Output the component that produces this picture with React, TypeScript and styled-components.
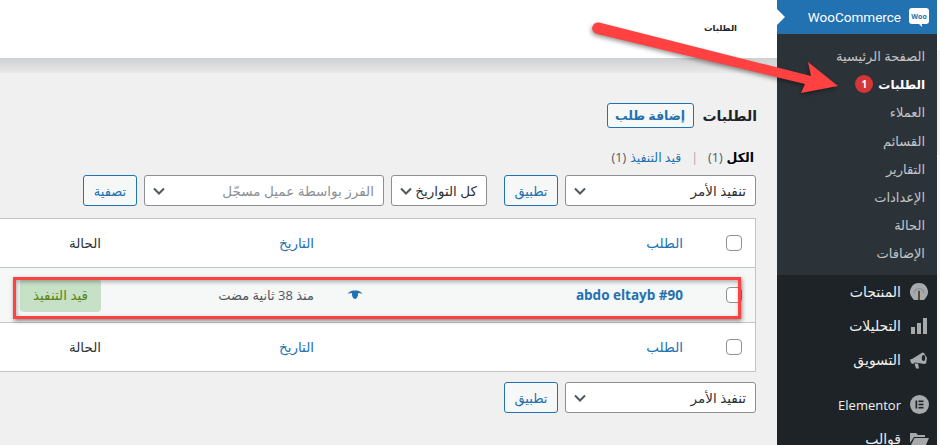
import React, { FC } from 'react';
import styled, { createGlobalStyle } from 'styled-components';

const GlobalStyle = createGlobalStyle`
  html, body {
    margin: 0;
    padding: 0;
    background: #f0f0f1;
  }
  * {
    box-sizing: border-box;
  }
`;

const subItems = ['الصفحة الرئيسية', 'الطلبات', 'العملاء', 'القسائم', 'التقارير', 'الإعدادات', 'الحالة', 'الإضافات'];

const Chevron: FC = () => (
  <svg width="16" height="16" viewBox="0 0 16 16" fill="none" stroke="#50575e" strokeWidth="2" aria-hidden>
    <path d="M3 5.500l5 5 5-5" />
  </svg>
);

const ProductsIcon: FC = () => (
  <svg width="20" height="20" viewBox="0 0 20 20" fill="#a7aaad" aria-hidden>
    <path d="M10 1a9 9 0 0 0-6.500 15.200L5 18h10l1.500-1.800A9 9 0 0 0 10 1z" />
    <path d="M5 11.500a5 5 0 1 1 10 0" fill="none" stroke="#8c8f94" strokeWidth="1.200" />
    <path d="M9 18V9.500a1 1 0 0 1 2 0V18z" fill="#5b4a2c" />
  </svg>
);

const AnalyticsIcon: FC = () => (
  <svg width="18" height="18" viewBox="0 0 18 18" fill="#a7aaad" aria-hidden>
    <rect x="1" y="10" width="4" height="7" />
    <rect x="7" y="6" width="4" height="11" />
    <rect x="13" y="1" width="4" height="16" />
  </svg>
);

const MarketingIcon: FC = () => (
  <svg width="20" height="20" viewBox="0 0 20 20" fill="#a7aaad" aria-hidden>
    <path d="M1 9.500l2 -0.500 10.500 -6.500 1.500 0.500 3 5 -1 5.500 -1.500 0.500 -9.500 -1.500 -2 1.500 -2 -1z" />
    <ellipse cx="14.500" cy="8" rx="1.700" ry="3" fill="#1d2327" />
    <path d="M5.500 13.500h3.500l1 5h-3z" />
  </svg>
);

const ElementorIcon: FC = () => (
  <svg width="19" height="19" viewBox="0 0 19 19" aria-hidden>
    <circle cx="9.500" cy="9.500" r="9.500" fill="#a7aaad" />
    <rect x="5.500" y="5.500" width="1.700" height="8" fill="#1d2327" />
    <rect x="8.500" y="5.500" width="5" height="1.600" fill="#1d2327" />
    <rect x="8.500" y="8.700" width="5" height="1.600" fill="#1d2327" />
    <rect x="8.500" y="11.900" width="5" height="1.600" fill="#1d2327" />
  </svg>
);

const FolderIcon: FC = () => (
  <svg width="20" height="18" viewBox="0 0 20 18" fill="#a7aaad" aria-hidden>
    <path d="M1 3h6l2 2h7v2H5L1 13z" />
    <path d="M5.500 8H20l-3.500 8H1.500z" />
  </svg>
);

const EyeIcon: FC = () => (
  <svg width="16" height="10" viewBox="0 0 16 10" fill="#2271b1" aria-hidden>
    <path d="M0.500 3.500C3 1 5.500 0.500 8 0.500s5 0.500 7.500 3C14 3.800 12.500 3.200 11 3c0.500 3-1.500 6-3 6S4.500 6 5 3C3.500 3.200 2 3.800 0.500 3.500z" />
  </svg>
);

const ArrowOverlay: FC = () => (
  <ArrowSvg viewBox="0 0 940 445" width="940" height="445" aria-hidden>
    <path
      d="M599 22.500 L811 76 L808 62 L838 86 L801 93 L805 84 L597 34 A5.800 5.800 0 0 1 599 22.500 Z"
      fill="#ff4141"
    />
  </ArrowSvg>
);

const OrdersTableRow: FC<{ footer?: boolean }> = ({ footer }) => (
  <HeadRow $footer={footer}>
    <CheckCell>
      <Checkbox />
    </CheckCell>
    <HeadLink>الطلب</HeadLink>
    <HeadLink>التاريخ</HeadLink>
    <HeadText>الحالة</HeadText>
  </HeadRow>
);

const BulkActions: FC = () => (
  <>
    <Select $width={191}>
      <span>تنفيذ الأمر</span>
      <Chevron />
    </Select>
    <OutlineButton $width={54}>تطبيق</OutlineButton>
  </>
);

export default function App() {
  return (
    <>
      <GlobalStyle />
      <Page dir="rtl">
        <EdgeStrip />
        <Sidebar>
          <WooHeader>
            <WooBadge>Woo</WooBadge>
            <WooTitle>WooCommerce</WooTitle>
            <HeaderNotch />
          </WooHeader>
          <SubMenu>
            {subItems.map(label => (
              <SubItem key={label} $active={label === 'الطلبات'}>
                {label}
                {label === 'الطلبات' && <CountBadge>1</CountBadge>}
              </SubItem>
            ))}
          </SubMenu>
          <MenuItem>
            <MenuIcon><ProductsIcon /></MenuIcon>
            المنتجات
          </MenuItem>
          <MenuItem>
            <MenuIcon><AnalyticsIcon /></MenuIcon>
            التحليلات
          </MenuItem>
          <MenuItem>
            <MenuIcon><MarketingIcon /></MenuIcon>
            التسويق
          </MenuItem>
          <MenuSeparator />
          <MenuItem $size={13}>
            <MenuIcon><ElementorIcon /></MenuIcon>
            Elementor
          </MenuItem>
          <MenuItem>
            <MenuIcon><FolderIcon /></MenuIcon>
            قوالب
          </MenuItem>
        </Sidebar>

        <Main>
          <TopBar>
            <TopBarTitle>الطلبات</TopBarTitle>
          </TopBar>
          <TopBarShade />
          <Content>
            <TitleRow>
              <Title>الطلبات</Title>
              <AddButton>إضافة طلب</AddButton>
            </TitleRow>
            <StatusFilters>
              <strong>الكل</strong> <Count>(1)</Count>
              <Pipe>|</Pipe>
              <StatusLink>قيد التنفيذ</StatusLink> <Count>(1)</Count>
            </StatusFilters>
            <FilterBar>
              <BulkActions />
              <Select $width={96} $gapStart={10}>
                <span>كل التواريخ</span>
                <Chevron />
              </Select>
              <Select $width={240} $muted>
                <span>الفرز بواسطة عميل مسجّل</span>
                <Chevron />
              </Select>
              <OutlineButton $width={54}>تصفية</OutlineButton>
            </FilterBar>
            <OrdersTable>
              <OrdersTableRow />
              <OrderRow>
                <CheckCell>
                  <Checkbox />
                </CheckCell>
                <OrderCell>
                  <OrderLink dir="ltr">abdo eltayb #90</OrderLink>
                  <EyeIcon />
                </OrderCell>
                <DateCell>منذ 38 ثانية مضت</DateCell>
                <div>
                  <StatusBadge>قيد التنفيذ</StatusBadge>
                </div>
              </OrderRow>
              <OrdersTableRow footer />
            </OrdersTable>
            <BottomBar>
              <BulkActions />
            </BottomBar>
          </Content>
        </Main>
        <Highlight />
        <ArrowOverlay />
      </Page>
    </>
  );
}

const Page = styled.div`
  position: relative;
  display: flex;
  width: 940px;
  height: 445px;
  overflow: hidden;
  background: #f0f0f1;
  font-family: "Open Sans", "DejaVu Sans", sans-serif;
  font-size: 13px;
  color: #3c434a;
`;

const EdgeStrip = styled.div`
  flex: 0 0 3px;
  background: linear-gradient(#ffffff 50px, #f0f0f1 50px, #f0f0f1 155px, #f7f7f7 155px);
`;

const Sidebar = styled.nav`
  flex: 0 0 160px;
  background: #1d2327;
  color: #f0f0f1;
`;

const WooHeader = styled.div`
  position: relative;
  display: flex;
  align-items: center;
  height: 34px;
  padding-right: 8px;
  background: #2271b1;
  color: #fff;
`;

const WooBadge = styled.span`
  position: relative;
  display: flex;
  align-items: center;
  justify-content: center;
  width: 20px;
  height: 16px;
  margin: -2px 0 0 8px;
  background: #fff;
  border-radius: 3px;
  color: #2271b1;
  font-size: 7px;
  font-weight: 700;
  direction: ltr;

  &::after {
    content: '';
    position: absolute;
    left: 10px;
    bottom: -3px;
    border-top: 3px solid #fff;
    border-left: 3px solid transparent;
  }
`;

const WooTitle = styled.span`
  font-family: Roboto, sans-serif;
  font-size: 13.500px;
  direction: ltr;
`;

const HeaderNotch = styled.span`
  position: absolute;
  left: 0;
  top: 9px;
  border-left: 8px solid #fff;
  border-top: 8px solid transparent;
  border-bottom: 8px solid transparent;
`;

const SubMenu = styled.div`
  display: flex;
  flex-direction: column;
  padding: 8px 12px 7px 0;
  background: #2c3338;
`;

const SubItem = styled.div<{ $active?: boolean }>`
  display: flex;
  align-items: center;
  height: 28.200px;
  color: ${props => (props.$active ? '#fff' : '#c3c4c7')};
  font-size: ${props => (props.$active ? 12 : 13)}px;
  font-weight: ${props => (props.$active ? 700 : 400)};
`;

const CountBadge = styled.span`
  display: flex;
  align-items: center;
  justify-content: center;
  width: 18px;
  height: 18px;
  margin-right: 5px;
  border-radius: 50%;
  background: #d63638;
  color: #fff;
  font-size: 10px;
  font-weight: 700;
`;

const MenuItem = styled.div<{ $size?: number }>`
  display: flex;
  align-items: center;
  height: 34px;
  color: #f0f0f1;
  font-size: ${props => props.$size || 14}px;
`;

const MenuIcon = styled.span`
  display: flex;
  align-items: center;
  justify-content: center;
  width: 36px;
  flex: none;
`;

const MenuSeparator = styled.div`
  height: 11px;
`;

const Main = styled.main`
  flex: 1;
  min-width: 0;
`;

const TopBar = styled.header`
  display: flex;
  align-items: center;
  height: 58px;
  padding: 0 40px 4px 0;
  background: #fff;
`;

const TopBarTitle = styled.span`
  color: #1d2327;
  font-size: 8.500px;
  font-weight: 700;
`;

const TopBarShade = styled.div`
  height: 15px;
  background: linear-gradient(#cfd0d1, #e9e9ea);
`;

const Content = styled.div`
  padding: 30px 21px 0 0;
`;

const TitleRow = styled.div`
  display: flex;
  align-items: center;
  gap: 9px;
  height: 25px;
  margin-right: -1px;
`;

const Title = styled.h1`
  margin: 0;
  color: #1d2327;
  font-size: 14px;
  font-weight: 700;
`;

const AddButton = styled.span`
  display: flex;
  align-items: center;
  justify-content: center;
  width: 87px;
  height: 25px;
  border: 1px solid #2271b1;
  border-radius: 3px;
  background: #f6f7f7;
  color: #2271b1;
  font-size: 12.500px;
  font-weight: 700;
`;

const StatusFilters = styled.div`
  display: flex;
  align-items: center;
  gap: 4px;
  height: 20px;
  margin-top: 19px;
  margin-bottom: 1px;
  padding-right: 2px;
  color: #50575e;
  font-size: 12.500px;

  strong {
    color: #000;
    font-weight: 700;
  }
`;

const Count = styled.span`
  color: #50575e;
`;

const Pipe = styled.span`
  margin: 0 6px;
  color: #a7aaad;
`;

const StatusLink = styled.span`
  color: #2271b1;
`;

const FilterBar = styled.div`
  display: flex;
  gap: 7px;
  margin-top: 8px;
`;

const BottomBar = styled.div`
  display: flex;
  gap: 7px;
  margin-top: 10px;
`;

const Select = styled.div<{ $width: number; $muted?: boolean; $gapStart?: number }>`
  display: flex;
  align-items: center;
  justify-content: space-between;
  width: ${props => props.$width}px;
  height: 31px;
  margin-right: ${props => props.$gapStart || 0}px;
  padding: 0 9px 0 6px;
  border: 1px solid #8c8f94;
  border-radius: 3px;
  background: #fff;
  color: ${props => (props.$muted ? '#8c8f94' : '#2c3338')};
  font-size: 13.500px;
  white-space: nowrap;
`;

const OutlineButton = styled.div<{ $width: number }>`
  display: flex;
  align-items: center;
  justify-content: center;
  width: ${props => props.$width}px;
  height: 31px;
  border: 1px solid #2271b1;
  border-radius: 3px;
  background: #f6f7f7;
  color: #2271b1;
  font-size: 13px;
`;

const OrdersTable = styled.div`
  margin-top: 12px;
  background: #fff;
  border: 1px solid #c3c4c7;
  border-left: 0;
`;

const rowColumns = '72px 369px 213px 1fr';

const HeadRow = styled.div<{ $footer?: boolean }>`
  display: grid;
  grid-template-columns: ${rowColumns};
  align-items: center;
  height: 49px;
  border-bottom: ${props => (props.$footer ? '0' : '1px solid #c3c4c7')};
  border-top: ${props => (props.$footer ? '1px solid #c3c4c7' : '0')};
`;

const CheckCell = styled.div`
  display: flex;
  padding-right: 13px;
`;

const Checkbox = styled.span`
  display: block;
  width: 16px;
  height: 16px;
  border: 1px solid #8c8f94;
  border-radius: 4px;
  background: #fff;
`;

const HeadLink = styled.span`
  color: #2271b1;
  font-size: 13.500px;
`;

const HeadText = styled.span`
  color: #2c3338;
  font-size: 13.500px;
`;

const OrderRow = styled.div`
  display: grid;
  grid-template-columns: ${rowColumns};
  align-items: center;
  height: 54px;
  background: #f6f7f7;
`;

const OrderCell = styled.div`
  display: flex;
  align-items: center;
  justify-content: space-between;
  padding-left: 33px;
`;

const OrderLink = styled.span`
  color: #2271b1;
  font-family: "Open Sans", sans-serif;
  font-size: 13.500px;
  font-weight: 700;
`;

const DateCell = styled.span`
  color: #50575e;
  font-size: 13px;
`;

const StatusBadge = styled.span`
  display: inline-flex;
  align-items: center;
  justify-content: center;
  width: 81px;
  height: 33px;
  border-radius: 4px;
  background: #c6e1c6;
  color: #5b841b;
  font-size: 13.500px;
`;

const Highlight = styled.div`
  position: absolute;
  left: 13px;
  top: 277px;
  width: 728px;
  height: 42px;
  border: 3px solid #ff4141;
  box-shadow: 1px 2px 4px rgba(0, 0, 0, 0.45), inset 1px 2px 4px rgba(0, 0, 0, 0.3);
`;

const ArrowSvg = styled.svg`
  position: absolute;
  left: 0;
  top: 0;
  pointer-events: none;
  filter: drop-shadow(-1px 2px 2px rgba(0, 0, 0, 0.4));
`;
